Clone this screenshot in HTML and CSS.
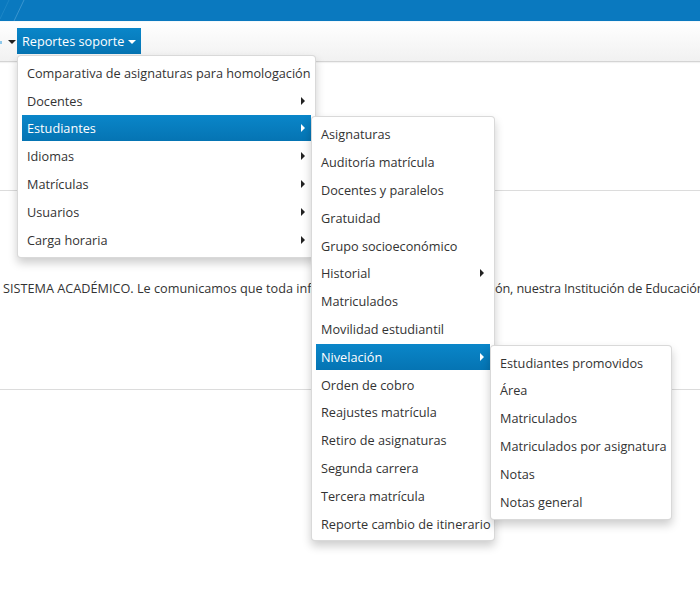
FILE: index.html
```html
<!DOCTYPE html>
<html lang="es">
<head>
<meta charset="utf-8">
<title>Reportes soporte</title>
<link rel="stylesheet" href="styles.css">
</head>
<body>
<div class="topbar">
  <svg class="topbar-deco" width="40" height="21" viewBox="0 0 40 21"><line x1="24" y1="0" x2="14" y2="21" stroke="#3a95cf" stroke-width="1"/><line x1="9" y1="0" x2="0" y2="19" stroke="#1d86c6" stroke-width="1"/></svg>
</div>
<div class="navbar">
  <span class="prev-tail"></span>
  <span class="caret-down dark"></span>
  <div class="nav-item">
    <a class="nav-btn">Reportes soporte <span class="caret-down"></span></a>
    <ul class="menu menu1">
      <li><a>Comparativa de asignaturas para homologación</a></li>
      <li class="sub"><a>Docentes</a></li>
      <li class="sub open"><a class="active">Estudiantes</a>
        <ul class="menu menu2">
          <li><a>Asignaturas</a></li>
          <li><a>Auditoría matrícula</a></li>
          <li><a>Docentes y paralelos</a></li>
          <li><a>Gratuidad</a></li>
          <li><a>Grupo socioeconómico</a></li>
          <li class="sub"><a>Historial</a></li>
          <li><a>Matriculados</a></li>
          <li><a>Movilidad estudiantil</a></li>
          <li class="sub open"><a class="active">Nivelación</a>
            <ul class="menu menu3">
              <li><a>Estudiantes promovidos</a></li>
              <li><a>Área</a></li>
              <li><a>Matriculados</a></li>
              <li><a>Matriculados por asignatura</a></li>
              <li><a>Notas</a></li>
              <li><a>Notas general</a></li>
            </ul>
          </li>
          <li><a>Orden de cobro</a></li>
          <li><a>Reajustes matrícula</a></li>
          <li><a>Retiro de asignaturas</a></li>
          <li><a>Segunda carrera</a></li>
          <li><a>Tercera matrícula</a></li>
          <li><a>Reporte cambio de itinerario</a></li>
        </ul>
      </li>
      <li class="sub"><a>Idiomas</a></li>
      <li class="sub"><a>Matrículas</a></li>
      <li class="sub"><a>Usuarios</a></li>
      <li class="sub"><a>Carga horaria</a></li>
    </ul>
  </div>
</div>
<div class="content">
  <div class="rule"></div>
  <p class="notice"><span class="lead">SISTEMA ACADÉMICO. Le comunicamos que toda información cuenta con una protección de datos en esta sección de gestión</span><span class="tail">ón, nuestra Institución de Educación</span></p>
  <div class="rule rule2"></div>
</div>
</body>
</html>
```

FILE: styles.css
```css
html, body {
  margin: 0;
  padding: 0;
}
body {
  width: 700px;
  height: 599px;
  overflow: hidden;
  background: #fff;
  font-family: "Open Sans", "Noto Sans", sans-serif;
  font-size: 12.7px;
  color: #333;
}
.topbar {
  height: 21px;
  background: #0a79bf;
  overflow: hidden;
}
.topbar-deco {
  display: block;
}
.navbar {
  height: 39px;
  border-top: 1px solid #f4f9fc;
  border-bottom: 1px solid #d4d4d4;
  box-shadow: 0 1px 1px rgba(0,0,0,0.05);
  background: linear-gradient(#ffffff, #f1f1f1);
  display: flex;
  align-items: flex-start;
  position: relative;
  z-index: 5;
}
.prev-tail {
  width: 2px;
  height: 3px;
  margin-top: 19px;
  background: #8fc9ec;
}
.caret-down {
  display: inline-block;
  width: 0;
  height: 0;
  border-left: 4px solid transparent;
  border-right: 4px solid transparent;
  border-top: 4px solid #fff;
}
.caret-down.dark {
  border-top-color: #222;
  margin: 18px 0 0 6px;
}
.nav-item {
  position: relative;
  margin-left: 1px;
  margin-top: 6px;
}
.nav-btn {
  display: flex;
  align-items: center;
  gap: 4px;
  height: 26px;
  padding: 0 5px 0 5px;
  color: #fff;
  white-space: nowrap;
  background: linear-gradient(#0a86c9, #0574b3);
  cursor: pointer;
}
.nav-btn .caret-down {
  margin-top: 1px;
}
.menu {
  list-style: none;
  margin: 0;
  padding: 3.9px 0;
  position: absolute;
  display: flex;
  flex-direction: column;
  gap: 1.8px;
  background: #fff;
  border: 1px solid rgba(0,0,0,0.15);
  border-radius: 4px;
  box-shadow: 0 5px 10px rgba(0,0,0,0.2);
  box-sizing: border-box;
}
.menu1 {
  top: 27px;
  left: 0;
  width: 299px;
}
.menu2 {
  width: 184px;
}
.menu3 {
  width: 182px;
}
.menu li {
  position: relative;
  margin: 0 4px;
}
.menu li > a {
  display: block;
  height: 26px;
  line-height: 26px;
  padding: 0 0 0 5px;
  white-space: nowrap;
  color: #333;
  cursor: pointer;
}
.menu li > a.active {
  color: #fff;
  background: linear-gradient(#0a86c9, #0574b3);
}
.menu li.sub > a::after {
  content: "";
  position: absolute;
  right: 6px;
  top: 9px;
  width: 0;
  height: 0;
  border-top: 4px solid transparent;
  border-bottom: 4px solid transparent;
  border-left: 4px solid #222;
}
.menu li.sub > a.active::after {
  border-left-color: #fff;
}
.menu li.open > .menu {
  top: 1px;
  left: 100%;
}
.content {
  padding-top: 128px;
}
.rule {
  height: 1px;
  background: #dcdcdc;
}
.notice {
  margin: 88px 0 0 3px;
  line-height: 18px;
  height: 18px;
  white-space: nowrap;
  overflow: hidden;
}
.notice .lead {
  display: inline-block;
  width: 492px;
  overflow: hidden;
  vertical-align: top;
}
.notice .tail {
  display: inline-block;
  vertical-align: top;
  letter-spacing: -0.15px;
}
.rule2 {
  margin-top: 92px;
}
```
